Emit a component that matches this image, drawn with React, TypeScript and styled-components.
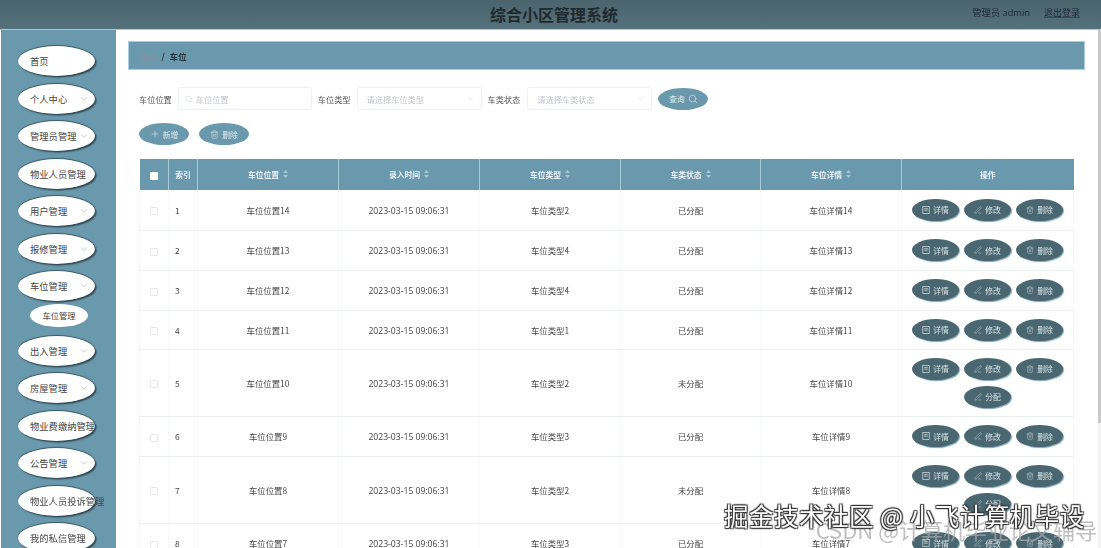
import React from 'react';
import styled, {createGlobalStyle} from 'styled-components';
import {ChevronDown, PenLine, Plus, Search, Trash2} from 'lucide-react';

const menu = [
    {name: '首页'},
    {name: '个人中心', arrow: true},
    {name: '管理员管理', arrow: true},
    {name: '物业人员管理'},
    {name: '用户管理', arrow: true},
    {name: '报修管理', arrow: true},
    {name: '车位管理', arrow: true, sub: '车位管理'},
    {name: '出入管理', arrow: true},
    {name: '房屋管理', arrow: true},
    {name: '物业费缴纳管理'},
    {name: '公告管理', arrow: true},
    {name: '物业人员投诉管理'},
    {name: '我的私信管理'},
];

const rows = [
    {id: 1, pos: 14, type: 2, status: '已分配', h: 40},
    {id: 2, pos: 13, type: 4, status: '已分配', h: 40},
    {id: 3, pos: 12, type: 4, status: '已分配', h: 40},
    {id: 4, pos: 11, type: 1, status: '已分配', h: 39},
    {id: 5, pos: 10, type: 2, status: '未分配', h: 67},
    {id: 6, pos: 9, type: 3, status: '已分配', h: 40},
    {id: 7, pos: 8, type: 2, status: '未分配', h: 67},
    {id: 8, pos: 7, type: 3, status: '已分配', h: 40},
];

const columns = [
    {w: 29},
    {w: 29, title: '索引'},
    {w: 141, title: '车位位置', sort: true},
    {w: 141, title: '录入时间', sort: true},
    {w: 141, title: '车位类型', sort: true},
    {w: 140, title: '车类状态', sort: true},
    {w: 141, title: '车位详情', sort: true},
    {w: 172, title: '操作'},
];

function SortMark() {
    return <svg width="5" height="8" viewBox="0 0 5 8" fill="#a9c6d2" style={{marginLeft: 4}}>
        <path d="M2.5 0 5 3H0zM2.5 8 0 5h5z"/>
    </svg>
}

function TicketIcon() {
    return <svg width="8" height="8" viewBox="0 0 8 8" fill="none" stroke="currentColor" strokeWidth="0.7">
        <rect x="0.8" y="0.5" width="6.4" height="7"/>
        <path d="M2.2 2.6h3.6M2.2 4.2h3.6"/>
    </svg>
}

export default function App() {
    return <>
        <GlobalStyle/>
        <Page>
            <Header>
                <Title>综合小区管理系统</Title>
                <UserBox>
                    <UserName>管理员 admin</UserName>
                    <Logout>退出登录</Logout>
                </UserBox>
            </Header>
            <Body>
                <Sidebar>
                    {menu.map(item => <React.Fragment key={item.name}>
                        <MenuItem>
                            <MenuText>{item.name}</MenuText>
                            {item.arrow && <MenuArrow><ChevronDown size={10} strokeWidth={1.2}/></MenuArrow>}
                        </MenuItem>
                        {item.sub && <SubItem>{item.sub}</SubItem>}
                    </React.Fragment>)}
                </Sidebar>
                <Main>
                    <Breadcrumb>
                        <Crumb>首页</Crumb>
                        <Slash>/</Slash>
                        <CurrentCrumb>车位</CurrentCrumb>
                    </Breadcrumb>
                    <FilterRow>
                        <FilterLabel>车位位置</FilterLabel>
                        <Field $width={134}>
                            <Search size={8} strokeWidth={1.4} color="#c0c4cc"/>
                            <span>车位位置</span>
                        </Field>
                        <FilterLabel>车位类型</FilterLabel>
                        <Field $width={125} $select>
                            <span>请选择车位类型</span>
                            <ChevronDown size={9} strokeWidth={1.2} color="#c0c4cc"/>
                        </Field>
                        <FilterLabel>车类状态</FilterLabel>
                        <Field $width={125} $select>
                            <span>请选择车类状态</span>
                            <ChevronDown size={9} strokeWidth={1.2} color="#c0c4cc"/>
                        </Field>
                        <ToolButton>查询 <Search size={10} strokeWidth={1.4}/></ToolButton>
                    </FilterRow>
                    <ActionRow>
                        <ToolButton><Plus size={10} strokeWidth={1.4}/> 新增</ToolButton>
                        <ToolButton><Trash2 size={9} strokeWidth={1.4}/> 删除</ToolButton>
                    </ActionRow>
                    <Table>
                        <colgroup>
                            {columns.map((c, i) => <col key={i} width={c.w}/>)}
                        </colgroup>
                        <thead>
                            <tr>
                                {columns.map((c, i) => <Th key={i}>
                                    {i === 0 ? <HeaderCheck/> : c.title}
                                    {c.sort && <SortMark/>}
                                </Th>)}
                            </tr>
                        </thead>
                        <tbody>
                            {rows.map(r => <tr key={r.id}>
                                <Td $height={r.h}><RowCheck/></Td>
                                <IndexTd>{r.id}</IndexTd>
                                <Td>车位位置{r.pos}</Td>
                                <DateTd>2023-03-15 09:06:31</DateTd>
                                <Td>车位类型{r.type}</Td>
                                <Td>{r.status}</Td>
                                <Td>车位详情{r.pos}</Td>
                                <Td>
                                    <OpsBox>
                                        <OpButton><TicketIcon/> 详情</OpButton>
                                        <OpButton><PenLine size={8} strokeWidth={1.3}/> 修改</OpButton>
                                        <OpButton><Trash2 size={8} strokeWidth={1.3}/> 删除</OpButton>
                                        {r.status === '未分配' && <OpButton><PenLine size={8} strokeWidth={1.3}/> 分配</OpButton>}
                                    </OpsBox>
                                </Td>
                            </tr>)}
                        </tbody>
                    </Table>
                </Main>
                <ScrollTrack><ScrollThumb/></ScrollTrack>
            </Body>
            <Watermark>
                <GreyMark>CSDN @计算机毕业论文辅导</GreyMark>
                <JuejinMark>掘金技术社区 @ 小飞计算机毕设</JuejinMark>
            </Watermark>
        </Page>
    </>
}

const GlobalStyle = createGlobalStyle`
  html, body {
    margin: 0;
    padding: 0;
    background: #fff;
    overflow: hidden;
  }

  * {
    box-sizing: border-box;
  }
`

const Page = styled.div`
  position: relative;
  width: 1101px;
  height: 548px;
  overflow: hidden;
  font-family: "Noto Sans CJK SC", "Open Sans", sans-serif;
  color: #444;
  filter: blur(0.4px);
`

const Header = styled.header`
  position: relative;
  height: 30px;
  display: flex;
  align-items: center;
  justify-content: center;
  background: linear-gradient(#4b646e, #55717c);
  border-bottom: 1px solid #a9ccd8;
`

const Title = styled.h1`
  margin: 0 0 1px 7px;
  font-size: 16px;
  font-weight: 700;
  color: #1f2a2e;
`

const UserBox = styled.div`
  position: absolute;
  right: 21px;
  top: 7px;
  display: flex;
  gap: 14px;
  font-size: 9px;
  line-height: 12px;
  color: #1d2a2f;
`

const UserName = styled.span`
  font-family: "Open Sans", "Noto Sans CJK SC", sans-serif;
  font-size: 9.3px;
`

const Logout = styled.span`
  text-decoration: underline;
  text-decoration-color: #3a4c53;
`

const Body = styled.div`
  display: flex;
  height: 518px;
  padding-left: 1px;
`

const Sidebar = styled.nav`
  flex: 0 0 115px;
  display: flex;
  flex-direction: column;
  align-items: flex-start;
  padding: 16px 0 0 17px;
  background: #6a99ad;
  overflow: hidden;
`

const MenuItem = styled.div`
  position: relative;
  flex: 0 0 30px;
  width: 77px;
  margin-bottom: 7.5px;
  padding-left: 12px;
  display: flex;
  align-items: center;
  background: #fff;
  border-radius: 50%;
  box-shadow: 1.5px 1.5px 1.5px #2e4650, 0 -1px 1px #3f5c68;
`

const MenuText = styled.span`
  font-size: 9.3px;
  color: #444;
  white-space: nowrap;
`

const MenuArrow = styled.span`
  position: absolute;
  right: 6px;
  top: 10px;
  display: flex;
  color: #8f9a9e;
`

const SubItem = styled.div`
  flex: 0 0 23px;
  width: 58px;
  margin: -5px 0 9px 12px;
  display: flex;
  align-items: center;
  justify-content: center;
  font-size: 8.3px;
  color: #444;
  background: #fff;
  border-radius: 50%;
`

const Main = styled.main`
  flex: 1;
  min-width: 0;
  padding: 11px 13px 0 12px;
  overflow: hidden;
`

const Breadcrumb = styled.div`
  height: 29px;
  display: flex;
  align-items: center;
  gap: 5px;
  padding-left: 11px;
  font-size: 8.3px;
  background: #6a99ad;
  border: 1px solid #a9d0df;
`

const Crumb = styled.span`
  color: #8c8f9c;
`

const Slash = styled.span`
  font-weight: 700;
  color: #26343a;
`

const CurrentCrumb = styled.span`
  font-weight: 700;
  color: #26343a;
`

const FilterRow = styled.div`
  display: flex;
  align-items: center;
  height: 23px;
  margin: 17px 0 0 11px;
`

const FilterLabel = styled.label`
  margin-right: 6px;
  font-size: 8.2px;
  color: #555;
  white-space: nowrap;

  &:not(:first-child) {
    margin-left: 6px;
  }

  &:last-of-type {
    margin-right: 7px;
  }
`

const Field = styled.div<{ $width: number; $select?: boolean }>`
  width: ${p => p.$width}px;
  height: 23px;
  display: flex;
  align-items: center;
  justify-content: ${p => p.$select ? 'space-between' : 'flex-start'};
  gap: 3px;
  padding: ${p => p.$select ? '0 6px 0 9px' : '0 6px'};
  font-size: 8.2px;
  color: #c0c4cc;
  background: #fff;
  border: 1px solid #eef1f3;
  border-radius: 2px;
`

const ToolButton = styled.button`
  width: 50px;
  height: 22px;
  padding: 0;
  margin-left: 6px;
  display: inline-flex;
  align-items: center;
  justify-content: center;
  gap: 3px;
  font-family: inherit;
  font-size: 7.8px;
  color: #dfeaee;
  background: #6a99ad;
  border: none;
  border-radius: 50%;
`

const ActionRow = styled.div`
  display: flex;
  gap: 10px;
  margin: 13px 0 0 11px;

  ${ToolButton} {
    margin-left: 0;
  }
`

const Table = styled.table`
  width: 934px;
  margin: 14px 0 0 11px;
  border-collapse: collapse;
  table-layout: fixed;
`

const Th = styled.th`
  height: 31px;
  padding: 0;
  font-size: 7.8px;
  font-weight: 700;
  color: #e9f1f4;
  text-align: center;
  background: #6a99ad;
  border-right: 1px solid #a9ccd8;

  &:last-child {
    border-right: none;
  }
`

const Td = styled.td<{ $height?: number }>`
  height: ${p => p.$height ? `${p.$height}px` : 'auto'};
  padding: 0;
  font-size: 8.4px;
  color: #444;
  text-align: center;
  border-right: 1px solid #f6f8f9;
  border-bottom: 1px solid #eceff1;

  &:first-child {
    border-left: 1px solid #f6f8f9;
  }
`

const IndexTd = styled(Td)`
  padding-left: 6px;
  text-align: left;
`

const DateTd = styled(Td)`
  padding-top: 2px;
  font-family: "Open Sans", sans-serif;
  font-size: 8.6px;
`

const HeaderCheck = styled.span`
  display: inline-block;
  width: 8px;
  height: 8px;
  vertical-align: middle;
  background: #fff;
  border-radius: 1px;
`

const RowCheck = styled.span`
  display: inline-block;
  width: 8px;
  height: 8px;
  vertical-align: middle;
  background: #fff;
  border: 1px solid #e6e9ec;
  border-radius: 1px;
`

const OpsBox = styled.div`
  display: flex;
  flex-wrap: wrap;
  justify-content: center;
  gap: 6px 5px;
  padding: 0 4px;
`

const OpButton = styled.button`
  width: 47px;
  height: 22px;
  padding: 0;
  display: inline-flex;
  align-items: center;
  justify-content: center;
  gap: 3px;
  font-family: inherit;
  font-size: 7.8px;
  color: #d7e3e7;
  background: #4a6670;
  border: none;
  border-radius: 50%;
  box-shadow: 1px 1px 1px #7fa7b6;
`

const ScrollTrack = styled.div`
  flex: 0 0 3px;
  background: #f4f4f4;
`

const ScrollThumb = styled.div`
  height: 393px;
  background: #c9c9c9;
`

const Watermark = styled.div`
  position: absolute;
  left: 0;
  top: 0;
  width: 100%;
  height: 100%;
  pointer-events: none;
`

const GreyMark = styled.div`
  position: absolute;
  right: 4px;
  top: 516px;
  font-size: 22px;
  line-height: 26px;
  white-space: nowrap;
  color: rgba(170, 170, 170, 0.75);
`

const JuejinMark = styled.div`
  position: absolute;
  left: 724px;
  top: 500px;
  font-size: 24.5px;
  line-height: 32px;
  letter-spacing: 0.5px;
  white-space: nowrap;
  color: #fff;
  text-shadow: 1px 1px 1px #333, -1px -1px 1px #333, 1px -1px 1px #333, -1px 1px 1px #333;
`
